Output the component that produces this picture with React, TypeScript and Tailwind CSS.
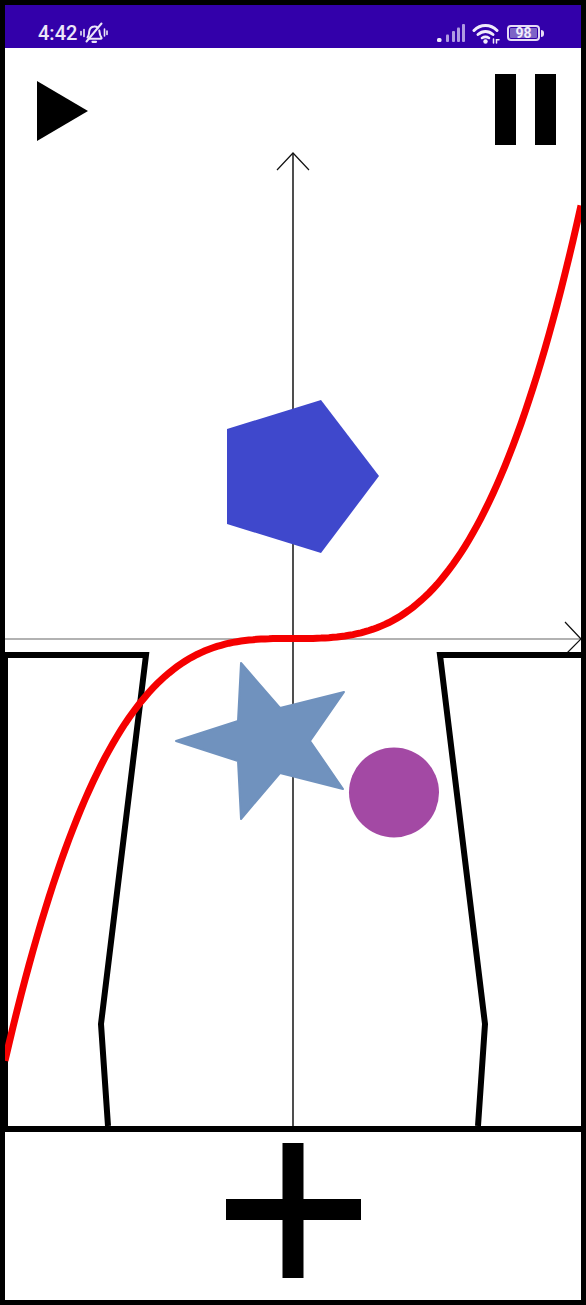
import React from 'react';

// y = k * x^3 around the axis origin, the left arm is a touch flatter
const originX = 288;
const originY = 590.5;
const k = 433 / Math.pow(288, 3);

const curvePoints = Array.from({ length: 145 }, (_, i) => {
  const dx = -288 + i * 4;
  const arm = dx < 0 ? 1 - 0.025 * Math.pow(-dx / 288, 2) : 1;
  return `${originX + dx},${(originY - k * arm * dx * dx * dx).toFixed(1)}`;
}).join(' ');

function BellOff() {
  return (
    <svg width="28" height="22" viewBox="0 0 28 22" fill="none" stroke="#ece6f8" strokeWidth="2" strokeLinecap="round">
      <path d="M7.500 15.500c1.600-1.800 1.400-3.800 1.700-5.800.4-2.800 2.300-4.800 4.800-5.100 1.400-.2 2.700.2 3.800 1M19.300 8.500c.3 2.800.4 5 2.100 7 .5.700.2 1.300-.6 1.300H9.500" />
      <path d="M12.500 19.800h3.500" strokeWidth="2.200" />
      <path d="M6.500 19.500 21.500 1.500" />
      <path d="M4 7.500v7M1 9.500v3.500M24.500 7v7M27 9v3.500" strokeWidth="1.600" />
    </svg>
  );
}

function Signal() {
  return (
    <svg width="28" height="18" viewBox="0 0 28 18" fill="#b09ae2">
      <rect x="0" y="14" width="4.500" height="4" rx="1.500" fill="#efe9fa" />
      <rect x="9" y="10.500" width="3" height="7.500" rx="1" />
      <rect x="15" y="7" width="3" height="11" rx="1" />
      <rect x="20" y="3.500" width="3" height="14.500" rx="1" />
      <rect x="25" y="0" width="3" height="18" rx="1" />
    </svg>
  );
}

function Wifi() {
  return (
    <svg width="28" height="21" viewBox="0 0 28 21" fill="none" stroke="#f1ecfb" strokeWidth="3" strokeLinecap="round">
      <path d="M2 7.500C8.500 .8 18.500 .8 25 7.500" />
      <path d="M6 11.500c4.500-4 10.500-4 15 0" />
      <path d="M10 15c2.400-1.600 4.600-1.600 7 0" strokeWidth="2.600" />
      <circle cx="13.500" cy="18.500" r="2.200" fill="#f1ecfb" stroke="none" />
      <path d="M21.500 16v4M24.500 20v-3.200h2.500" strokeWidth="1.500" />
    </svg>
  );
}

function Battery() {
  return (
    <div className="flex items-center gap-[1px]">
      <div className="flex h-[16px] w-[33px] items-center rounded-[4px] border-2 border-[#e6dcf5] p-[1px]">
        <div className="flex h-full w-full items-center justify-center rounded-[1px] bg-[#7d63c6] text-[14px] leading-none font-bold text-[#f1ecfb]">
          98
        </div>
      </div>
      <div className="h-[7px] w-[3px] rounded-r-sm bg-[#e6dcf5]" />
    </div>
  );
}

export default function App() {
  return (
    <div className="flex h-[1305px] w-[586px] flex-col border-[5px] border-black bg-white font-['Roboto',sans-serif]">
      <div className="flex h-[43px] shrink-0 items-center justify-between bg-[#3300aa] pt-[13px] pr-[37px] pl-[33px]">
        <div className="flex items-center gap-[3px]">
          <span className="text-[20px] font-medium text-[#ece6f8]">4:42</span>
          <BellOff />
        </div>
        <div className="flex items-center gap-[7px]">
          <Signal />
          <Wifi />
          <Battery />
        </div>
      </div>

      <div className="relative min-h-0 flex-1">
        <svg className="block h-full w-full" viewBox="0 0 576 1078" fill="none">
          {/* axes */}
          <path d="M288 1078V105" stroke="#222" strokeWidth="1.600" />
          <path d="M272 122 288 105l16 17" stroke="#111" strokeWidth="1.200" />
          <path d="M0 591H576" stroke="#999" strokeWidth="1.600" />
          <path d="M560 574 576 591 561 606" stroke="#111" strokeWidth="1.200" />

          {/* side walls */}
          <path d="M0 607H141L96 976l7 102" stroke="#000" strokeWidth="6" />
          <path d="M1.500 1078V604" stroke="#000" strokeWidth="3" />
          <path d="M576 607H435L480 976l-7 102" stroke="#000" strokeWidth="6" />

          {/* shapes */}
          <polygon points="222,381 316,352 374,428 316,505 222,476" fill="#3f48cc" />
          <polygon
            points="236,615 275,660 339,644 305,693 338,741 275,725 236,771 233,713 171,693 233,673"
            fill="#7092be"
            stroke="#7092be"
            strokeWidth="2"
            strokeLinejoin="round"
          />
          <circle cx="389" cy="744.500" r="45" fill="#a349a4" />

          <polyline points={curvePoints} stroke="#f50000" strokeWidth="7" />
        </svg>

        <button className="absolute top-[33px] left-[32px]" aria-label="Play">
          <svg className="block" width="51" height="60" viewBox="0 0 51 60">
            <polygon points="0,0 51,30 0,60" fill="#000" />
          </svg>
        </button>
        <button className="absolute top-[26px] right-[25px] flex gap-[19px]" aria-label="Pause">
          <div className="h-[71px] w-[21px] bg-black" />
          <div className="h-[71px] w-[21px] bg-black" />
        </button>
      </div>

      <div className="relative flex h-[174px] shrink-0 items-start justify-center border-t-[6px] border-black pt-[11px]">
        <svg className="block" width="135" height="135" viewBox="0 0 135 135" fill="#000">
          <rect x="56.500" y="0" width="21" height="135" />
          <rect x="0" y="56" width="135" height="21" />
        </svg>
      </div>
    </div>
  );
}
